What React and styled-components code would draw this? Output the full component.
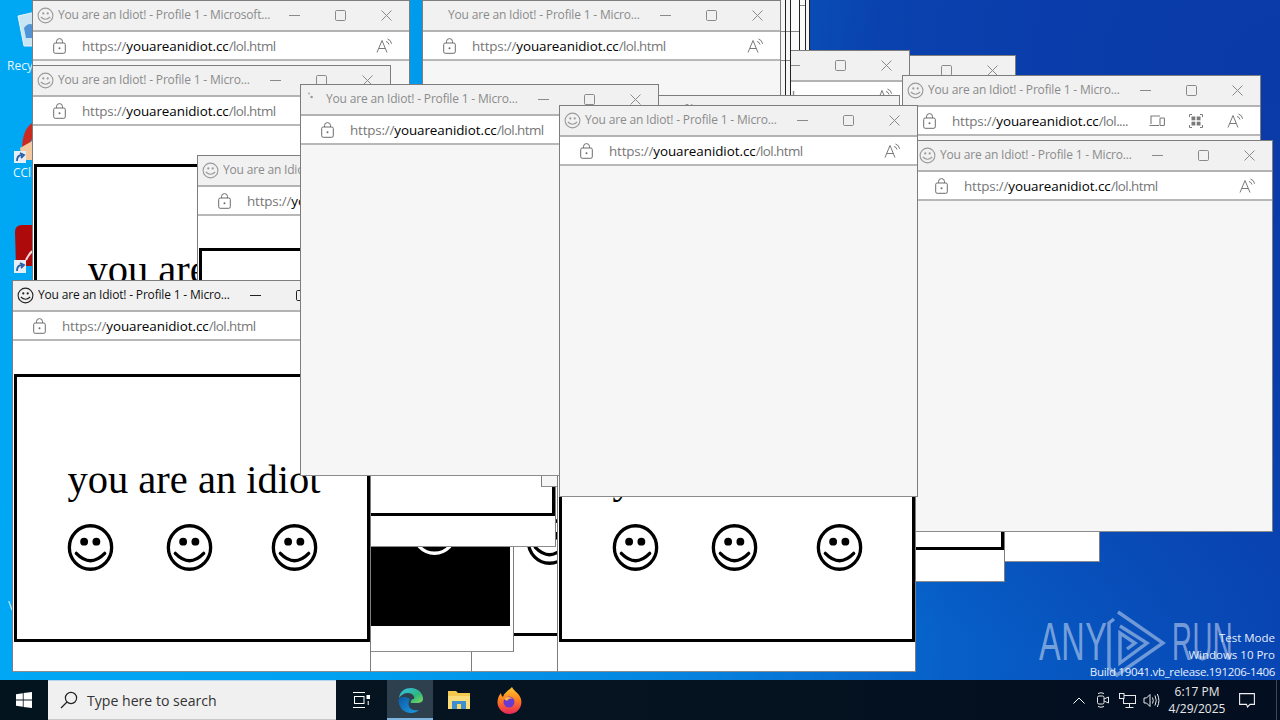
import React from "react";
import styled, { createGlobalStyle } from "styled-components";

const Global = createGlobalStyle`
  html, body { margin: 0; padding: 0; width: 1280px; height: 720px; overflow: hidden; }
  body { font-family: "Open Sans", "Liberation Sans", sans-serif; }
  #root { width: 1280px; height: 720px; }
`;

const Screen = styled.div`
  width: 1280px; height: 720px; display: flex; flex-direction: column; overflow: hidden;
`;
const Desktop = styled.div`
  position: relative; flex: 1; overflow: hidden;
  background:
    radial-gradient(ellipse 900px 620px at 1280px 60px, #0a3aa8 0%, rgba(10,58,168,0.85) 45%, rgba(10,80,190,0) 100%),
    linear-gradient(96deg, #00a8f4 0%, #00a0f0 32%, #0680dc 58%, #0760c8 75%, #0846b4 100%);
`;

/* ---------- desktop shortcuts peeking out on the left ---------- */
const DeskIcon = styled.svg`
  position: absolute; left: ${p => p.$x}px; top: ${p => p.$y}px; display: block;
`;
const DeskLabel = styled.span`
  position: absolute; left: ${p => p.$x}px; top: ${p => p.$y}px;
  font-size: 12px; color: #e8f6ff; line-height: 16px;
`;

/* ---------- browser window ---------- */
const Win = styled.section`
  position: absolute; left: ${p => p.$x}px; top: ${p => p.$y}px;
  width: ${p => p.$w}px; height: ${p => p.$h}px;
  box-sizing: border-box; border: 1px solid #7d7d7d; border-bottom-color: #8c8c8c;
  display: flex; flex-direction: column; overflow: hidden;
  background: ${p => (p.$gray ? "#f6f6f6" : "#ffffff")};
`;
const TitleBar = styled.header`
  flex: none; height: 29px; box-sizing: content-box; background: #f1f1f1;
  border-bottom: 2px solid #b3b3b3;
  display: flex; align-items: center; padding-left: 3px;
  color: ${p => (p.$active ? "#111" : "#8b8b8b")};
`;
const Fav = styled.span`
  flex: none; width: 18px; height: 18px; margin-right: 4px;
  display: flex; align-items: center; justify-content: center;
`;
const TitleText = styled.span`
  flex: 1; font-size: 12px; letter-spacing: -0.18px; white-space: nowrap; overflow: hidden; line-height: 16px;
  margin-top: -2px;
`;
const Controls = styled.div`
  flex: none; display: flex; align-items: center; gap: 35px; padding-right: 17px; padding-left: 6px;
  color: ${p => (p.$active ? "#222" : "#8a8a8a")};
`;
const AddressBar = styled.div`
  flex: none; height: 27px; background: #fff; border-bottom: 2px solid #b8b8b8;
  display: flex; align-items: center; padding-left: 20px; padding-right: 16px;
`;
const LockSlot = styled.span`
  flex: none; width: 14px; height: 16px; margin-right: 15px; color: #6c6c6c; display: flex;
`;
const Url = styled.span`
  flex: 1; font-size: 13.4px; letter-spacing: -0.18px; color: #767676; white-space: nowrap; overflow: hidden;
  font-family: "Open Sans", sans-serif; line-height: 18px;
  b { font-weight: 400; color: #000; letter-spacing: -0.05px; }
  em { font-style: normal; letter-spacing: -0.55px; }
`;
const ToolIcons = styled.div`
  flex: none; display: flex; align-items: center; gap: 24px; color: #7a7a7a;
`;

/* ---------- the page inside ---------- */
const Page = styled.div`
  position: relative; flex: 1; padding-top: ${p => p.$top}px; padding-left: 1px;
`;
const Frame = styled.div`
  box-sizing: border-box; width: 356px; height: 268px;
  border: 3px solid #000; position: relative;
  background: ${p => (p.$invert ? "#000" : "#fff")};
  color: ${p => (p.$invert ? "#fff" : "#000")};
  display: flex; flex-direction: column; align-items: center;
`;
const Shout = styled.h1`
  margin: 78px 0 0 4px; font: 400 40.5px/50px "Liberation Serif", serif; white-space: nowrap;
`;
const Smiles = styled.div`
  width: 100%; display: grid; grid-template-columns: 50px 47px 52px 47px 58px 47px; margin-top: 19px;
`;
const SmileSlot = styled.span`
  grid-column: ${p => p.$col}; display: block; height: 48px;
`;

/* ---------- stacked edges of windows ---------- */
const Edge = styled.div`
  position: absolute; left: ${p => p.$x}px; top: ${p => p.$y}px;
  width: ${p => p.$w}px; height: ${p => p.$h}px; box-sizing: border-box;
  border-right: 1px solid #222; background: ${p => (p.$gray ? "#f6f6f6" : "#fbfbfb")};
`;
const Rule = styled.i`
  position: absolute; left: 0; right: 0; top: ${p => p.$y}px; height: 1px; background: #888; display: block;
`;

/* ---------- watermark ---------- */
const MarkWord = styled.span`
  position: absolute; left: ${p => p.$x}px; top: 613px; font: 400 54px/56px "Liberation Sans", sans-serif;
  color: rgba(255,255,255,0.46); transform: scaleX(${p => p.$sx}); transform-origin: left top; letter-spacing: 1px;
`;
const MarkLogo = styled.svg`
  position: absolute; left: 1100px; top: 605px;
`;
const SysNote = styled.div`
  position: absolute; right: 5px; top: 630px; text-align: right; color: #e6eefc;
  font-size: 11.5px; display: flex; flex-direction: column; line-height: 16.5px;
`;
const BuildLine = styled.span`
  letter-spacing: -0.3px; margin-top: 1px;
`;

/* ---------- taskbar ---------- */
const Taskbar = styled.footer`
  flex: none; height: 40px; display: flex; align-items: stretch;
  background: linear-gradient(90deg, #04141f 0%, #051420 45%, #030e20 100%); color: #fff;
`;
const StartBtn = styled.div`
  width: 48px; display: flex; align-items: center; justify-content: center;
`;
const Search = styled.div`
  width: 288px; background: #f0f0f0; display: flex; align-items: center; gap: 9px; padding-left: 12px; box-sizing: border-box;
  border-top: 1px solid #b8d4f0; border-bottom: 1px solid #c8c8c8; color: #333; font-size: 14.1px;
`;
const TaskBtn = styled.div`
  width: ${p => p.$w || 48}px; display: flex; align-items: center; justify-content: center; box-sizing: border-box;
  ${p => p.$on && "background:#2e404d; border-bottom:2px solid #7db4e0; padding-top:2px;"}
`;
const Tray = styled.div`
  margin-left: auto; display: flex; align-items: center;
`;
const TrayIcon = styled.span`
  width: 24px; display: flex; justify-content: center; align-items: center;
`;
const Clock = styled.div`
  width: 72px; margin-left: -2px; text-align: center; font-size: 12px; line-height: 17.5px; color: #e8e8e8;
`;
const Notify = styled.span`
  width: 28px; margin-right: 15px; display: flex; justify-content: center;
`;
const ShowDesk = styled.span`
  align-self: stretch; width: 4px; box-sizing: border-box; border-left: 1px solid #3a4a5a;
`;

/* ---------- icons ---------- */
const Smiley = ({ size = 47, sw = 3.4, color = "currentColor" }) => (
  <svg width={size} height={size} viewBox="0 0 47 48" style={{ display: "block" }}>
    <ellipse cx="23.5" cy="24" rx="21.6" ry="22.2" fill="none" stroke={color} strokeWidth={sw} />
    <circle cx="17" cy="18" r="4" fill={color} />
    <circle cx="29.5" cy="18" r="4" fill={color} />
    <path d="M9 30 Q23.5 45 38 30" fill="none" stroke={color} strokeWidth={sw} strokeLinecap="round" />
  </svg>
);
const TabSmile = ({ color }) => (
  <svg width="17" height="17" viewBox="0 0 17 17">
    <circle cx="8.5" cy="8.5" r="7.4" fill="none" stroke={color} strokeWidth="1.1" />
    <circle cx="6.3" cy="6.4" r="1.1" fill={color} />
    <circle cx="10.7" cy="6.4" r="1.1" fill={color} />
    <path d="M3.8 10 Q8.5 14.5 13.2 10" fill="none" stroke={color} strokeWidth="1.1" />
  </svg>
);
const Dots = () => (
  <svg width="17" height="17" viewBox="0 0 17 17">
    <circle cx="4" cy="2.5" r="1.1" fill="#b4b4b4" />
    <circle cx="6.6" cy="6" r="1.3" fill="#9a9a9a" />
  </svg>
);
const Min = () => (
  <svg width="11" height="11" viewBox="0 0 11 11" style={{ display: "block" }}>
    <path d="M0 5.5H11" stroke="currentColor" strokeWidth="1" />
  </svg>
);
const Max = () => (
  <svg width="11" height="11" viewBox="0 0 11 11" style={{ display: "block" }}>
    <rect x="0.5" y="0.5" width="10" height="10" rx="1.2" fill="none" stroke="currentColor" />
  </svg>
);
const Close = () => (
  <svg width="11" height="11" viewBox="0 0 11 11" style={{ display: "block" }}>
    <path d="M0.5 0.5L10.5 10.5M10.5 0.5L0.5 10.5" stroke="currentColor" strokeWidth="1" />
  </svg>
);
const Lock = () => (
  <svg width="13" height="16" viewBox="0 0 13 16" style={{ display: "block" }}>
    <rect x="0.7" y="5" width="11.6" height="10.3" rx="1.5" fill="none" stroke="currentColor" strokeWidth="1" />
    <path d="M3.5 5V3.6a3 3 0 0 1 6 0V5" fill="none" stroke="currentColor" strokeWidth="1" />
    <circle cx="6.5" cy="10.2" r="1" fill="currentColor" />
  </svg>
);
const ReadAloud = () => (
  <svg width="17" height="15" viewBox="0 0 17 15" style={{ display: "block" }}>
    <path d="M1 14.5L6 2.5L11 14.5M2.8 10.5H9.2" fill="none" stroke="currentColor" strokeWidth="1" />
    <path d="M10 3.5Q12.5 4 13 6.5M11.5 1Q15 2 15.6 5.8" fill="none" stroke="currentColor" strokeWidth="1" />
  </svg>
);
const DeviceIcon = () => (
  <svg width="16" height="13" viewBox="0 0 16 13" style={{ display: "block" }}>
    <path d="M2 10V2h9M0.5 11.5H10" fill="none" stroke="currentColor" strokeWidth="1.1" />
    <rect x="11" y="4" width="4.4" height="7.5" rx="0.8" fill="none" stroke="currentColor" strokeWidth="1.1" />
  </svg>
);
const AppGrid = () => (
  <svg width="14" height="14" viewBox="0 0 14 14" style={{ display: "block" }}>
    <path d="M0.5 3V0.5H3M11 0.5h2.5V3M13.5 11v2.5H11M3 13.5H0.5V11" fill="none" stroke="currentColor" />
    <rect x="2.5" y="2.5" width="3.8" height="3.8" fill="currentColor" />
    <rect x="7.7" y="2.5" width="3.8" height="3.8" fill="currentColor" />
    <rect x="2.5" y="7.7" width="3.8" height="3.8" fill="currentColor" />
    <rect x="7.7" y="7.7" width="3.8" height="3.8" fill="currentColor" />
  </svg>
);

const SHORT = "You are an Idiot! - Profile 1 - Micro...";

const Browser = ({ x, y, w = 359, h = 392, title = SHORT, fav = "smile", active, gray, pageTop, invert, noTools, extras }) => (
  <Win $x={x} $y={y} $w={w} $h={h} $gray={gray}>
    <TitleBar $active={active}>
      <Fav>
        {fav === "smile" && <TabSmile color={active ? "#222" : "#9a9a9a"} />}
        {fav === "dots" && <Dots />}
      </Fav>
      <TitleText>{title}</TitleText>
      <Controls $active={active}>
        <Min /><Max /><Close />
      </Controls>
    </TitleBar>
    <AddressBar>
      <LockSlot><Lock /></LockSlot>
      <Url>https://<b>youareanidiot.cc</b><em>{extras ? "/lol...." : "/lol.html"}</em></Url>
      {!noTools && (
        <ToolIcons>
          {extras && <DeviceIcon />}
          {extras && <AppGrid />}
          <ReadAloud />
        </ToolIcons>
      )}
    </AddressBar>
    {pageTop !== undefined && (
      <Page $top={pageTop}>
        <Frame $invert={invert}>
          <Shout>you are an idiot</Shout>
          <Smiles>
            <SmileSlot $col={2}><Smiley /></SmileSlot>
            <SmileSlot $col={4}><Smiley /></SmileSlot>
            <SmileSlot $col={6}><Smiley /></SmileSlot>
          </Smiles>
        </Frame>
      </Page>
    )}
  </Win>
);

export default function App() {
  return (
    <Screen>
      <Global />
      <Desktop>
        <DeskIcon $x={16} $y={8} width="24" height="44" viewBox="0 0 24 44">
          <path d="M2 8 L24 3 V38 H8 Z" fill="#c9e4f2" stroke="#e8f4fa" strokeWidth="1" />
          <path d="M8 20 q6 -8 12 0 l-2 10 h-8z" fill="#2f7fd0" opacity="0.8" />
        </DeskIcon>
        <DeskLabel $x={7} $y={58}>Recy</DeskLabel>
        <DeskIcon $x={14} $y={120} width="20" height="46" viewBox="0 0 20 46">
          <path d="M8 30 Q8 8 20 2 V16 Q16 20 15 30Z" fill="#cc2a20" />
          <path d="M6 28 L20 20 V40 H8 Z" fill="#f4c9a0" />
          <rect x="0" y="31" width="12" height="12" fill="#e6eef5" />
          <path d="M3 41 Q3 35 8 35 M6 33 L10 35 L7 38" fill="none" stroke="#2a5fa8" strokeWidth="1.8" />
        </DeskIcon>
        <DeskLabel $x={13} $y={165}>CCl</DeskLabel>
        <DeskIcon $x={14} $y={224} width="20" height="50" viewBox="0 0 20 50">
          <path d="M1 8 Q1 1 8 1 H20 V42 H2 Z" fill="#ad0b0b" />
          <path d="M12 36 Q16 28 20 26" stroke="#f3d8d8" strokeWidth="2" fill="none" />
          <rect x="0" y="24" width="12" height="13" fill="#e6eef5" transform="translate(0,12)" />
          <path d="M3 47 Q3 41 8 41 M6 39 L10 41 L7 44" fill="none" stroke="#2a5fa8" strokeWidth="1.8" />
        </DeskIcon>
        <DeskLabel $x={8} $y={598}>\</DeskLabel>

        <MarkWord $x={1039} $sx={0.6}>ANY</MarkWord>
        <MarkWord $x={1172} $sx={0.51}>RUN</MarkWord>
        <MarkLogo width="70" height="76" viewBox="0 0 70 76" fill="none" stroke="rgba(255,255,255,0.42)" strokeWidth="3.4">
          <path d="M18 7 L63 38 L17 70 L9 63 V18 L14 14" />
          <path d="M20 21 L47 38 L20 58 V28 L35 38 L27 44" />
        </MarkLogo>
        <SysNote>
          <span>Test Mode</span>
          <span>Windows 10 Pro</span>
          <BuildLine>Build 19041.vb_release.191206-1406</BuildLine>
        </SysNote>

        <Browser x={32} y={0} w={378} h={400} gray title="You are an Idiot! - Profile 1 - Microsoft..." />
        <Edge $x={780} $y={0} $w={30} $h={96} $gray />
        <Edge $x={780} $y={0} $w={26} $h={96}><Rule $y={5} /></Edge>
        <Edge $x={780} $y={0} $w={20} $h={96}><Rule $y={31} /></Edge>
        <Browser x={657} y={55} noTools />
        <Browser x={551} y={50} />
        <Edge $x={780} $y={0} $w={11} $h={96} $gray><Rule $y={31} /><Rule $y={60} /></Edge>
        <Edge $x={780} $y={0} $w={6} $h={96} $gray><Rule $y={31} /><Rule $y={60} /></Edge>

        <Browser x={741} y={170} />
        <Browser x={646} y={190} pageTop={31} />

        <Browser x={113} y={280} pageTop={33} />
        <Browser x={471} y={275} h={397} pageTop={32} />
        <Browser x={152} y={265} w={362} h={387} pageTop={32} invert />
        <Browser x={32} y={65} pageTop={38} />
        <Browser x={197} y={155} pageTop={32} />
        <Browser x={12} y={280} active pageTop={33} noTools />

        <Browser x={422} y={0} gray fav="none" />
        <Browser x={902} y={75} gray extras />
        <Browser x={914} y={140} gray />
        <Browser x={541} y={95} gray />
        <Browser x={557} y={280} pageTop={33} />
        <Browser x={300} y={84} gray fav="dots" noTools />
        <Browser x={559} y={105} gray />
      </Desktop>
      <Taskbar>
        <StartBtn>
          <svg width="16" height="16" viewBox="0 0 16 16">
            <path d="M0 2.2L6.8 1.2V7.5H0ZM7.6 1.1L16 0V7.5H7.6ZM0 8.4H6.8V14.8L0 13.8ZM7.6 8.4H16V16L7.6 14.9Z" fill="#fff" />
          </svg>
        </StartBtn>
        <Search>
          <svg width="18" height="18" viewBox="0 0 18 18" fill="none" stroke="#222" strokeWidth="1.2">
            <circle cx="11" cy="7" r="5.6" />
            <path d="M7 11L1 17" />
          </svg>
          <span>Type here to search</span>
        </Search>
        <TaskBtn $w={51}>
          <svg width="17" height="16" viewBox="0 0 17 16" fill="none" stroke="#fff" strokeWidth="1">
            <path d="M0 0.5H12M0 15.5H12" />
            <rect x="1.5" y="4.5" width="9.5" height="7" />
            <rect x="14" y="3.5" width="2.5" height="3" fill="#fff" />
            <path d="M15.2 9V13" />
          </svg>
        </TaskBtn>
        <TaskBtn $w={46} $on>
          <svg width="27" height="27" viewBox="0 0 27 27">
            <defs>
              <linearGradient id="edgeA" x1="0" y1="0" x2="1" y2="1">
                <stop offset="0" stopColor="#35c1f1" />
                <stop offset="0.6" stopColor="#2fb67d" />
                <stop offset="1" stopColor="#7fdc5c" />
              </linearGradient>
              <linearGradient id="edgeB" x1="0" y1="0" x2="1" y2="1">
                <stop offset="0" stopColor="#0c59a4" />
                <stop offset="1" stopColor="#1b9de2" />
              </linearGradient>
            </defs>
            <path d="M2 11C3 4 8 1 14 1c7 0 12 5 12 11 0 3-3 4-6 4h-6c-1-2 1-4 3-4 1-3-2-6-6-6-4 0-7 2-9 5z" fill="url(#edgeA)" />
            <path d="M1.5 12C1 19 6 26 14 26c3 0 6-1 8-3-4 1-9 0-10-4-1-3 0-5 1-7-5-3-9-2-11.500 0z" fill="url(#edgeB)" />
          </svg>
        </TaskBtn>
        <TaskBtn $w={52}>
          <svg width="24" height="20" viewBox="0 0 24 20">
            <path d="M1 1H9L11 3H23V19H1Z" fill="#f3c94f" />
            <path d="M1 6H23V19H1Z" fill="#f9dd7a" />
            <path d="M5 11H19V19H5Z" fill="#3f8fd0" />
            <rect x="10" y="14" width="4" height="5" fill="#f6d862" />
          </svg>
        </TaskBtn>
        <TaskBtn $w={48}>
          <svg width="25" height="27" viewBox="0 0 25 27">
            <defs>
              <linearGradient id="fox" x1="0.5" y1="0" x2="0.5" y2="1">
                <stop offset="0" stopColor="#ffcc2f" />
                <stop offset="0.5" stopColor="#ff7a1f" />
                <stop offset="1" stopColor="#e8265e" />
              </linearGradient>
            </defs>
            <path d="M15 0c1 3 5 5 7 8 2 3 3 6 2 10-1 5-6 9-11.500 9C6 27 1 22 .5 16 .3 12 2 8 4 6c0 2 1 3 2 4 1-4 5-6 9-10z" fill="url(#fox)" />
            <circle cx="12" cy="15" r="5.500" fill="#6a3bd0" />
            <path d="M7 12c3-3 7-2 9 0-3-1-5 0-6 2z" fill="#ffb347" />
          </svg>
        </TaskBtn>
        <Tray>
          <TrayIcon>
            <svg width="12" height="7" viewBox="0 0 12 7" fill="none" stroke="#fff"><path d="M0.500 6.500L6 1L11.500 6.500" /></svg>
          </TrayIcon>
          <TrayIcon>
            <svg width="14" height="16" viewBox="0 0 14 16" fill="none" stroke="#e8e8e8">
              <rect x="1.500" y="4" width="6.500" height="8" rx="1.500" />
              <path d="M8 7L12.500 5V11L8 9" />
              <path d="M2 1.500Q5 0 8 1.500M2 14.500Q5 16 8 14.500" />
            </svg>
          </TrayIcon>
          <TrayIcon>
            <svg width="17" height="15" viewBox="0 0 17 15" fill="none" stroke="#e8e8e8">
              <rect x="4.500" y="2.500" width="12" height="8" />
              <rect x="0.500" y="0.500" width="4.500" height="5" fill="#04121e" />
              <path d="M10.500 10.500V14M6.500 14.500H14.500" />
            </svg>
          </TrayIcon>
          <TrayIcon>
            <svg width="17" height="15" viewBox="0 0 17 15" fill="none" stroke="#e8e8e8">
              <path d="M1 5H3.500L7 1.500V13.500L3.500 10H1Z" />
              <path d="M9.500 4.500Q11 7.500 9.500 10.500M12 2.500Q14.500 7.500 12 12.500M14.300 1Q17.500 7.500 14.300 14" />
            </svg>
          </TrayIcon>
          <Clock>
            <div>6:17 PM</div>
            <div>4/29/2025</div>
          </Clock>
          <Notify>
            <svg width="16" height="15" viewBox="0 0 16 15" fill="none" stroke="#f0f0f0" strokeWidth="1.100">
              <path d="M0.600 0.600H15.400V11.400H11L8.500 14L7.500 11.400H0.600Z" />
            </svg>
          </Notify>
          <ShowDesk />
        </Tray>
      </Taskbar>
    </Screen>
  );
}
